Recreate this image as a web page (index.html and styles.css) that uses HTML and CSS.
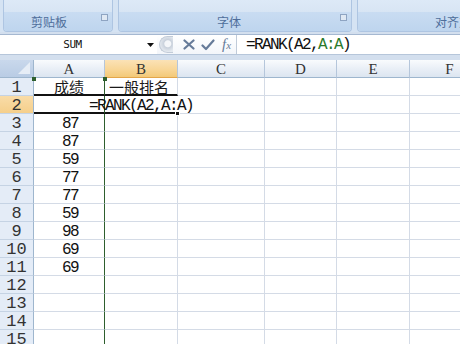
FILE: index.html
```html
<!DOCTYPE html>
<html>
<head>
<meta charset="utf-8">
<link rel="stylesheet" href="styles.css">
</head>
<body>
<div class="ribbon">
  <div class="group g1"><div class="gbody"></div><div class="glabel">剪贴板<span class="launch"></span></div></div>
  <div class="group g2"><div class="gbody"></div><div class="glabel">字体<span class="launch"></span></div></div>
  <div class="group g3"><div class="gbody"></div><div class="glabel">对齐方式</div></div>
</div>
<div class="fbar">
  <div class="namebox">SUM</div>
  <div class="nbarrow"><svg width="7" height="4" viewBox="0 0 7 4"><path d="M0 0H7L3.5 4Z" fill="#111"/></svg></div>
  <div class="fbtns">
    <span class="grip"></span>
    <svg class="ico" width="12" height="11" viewBox="0 0 12 11"><path d="M1.5 1.5L10.5 9.5M10.5 1.5L1.5 9.5" stroke="#667b99" stroke-width="2.2" stroke-linecap="round"/></svg>
    <svg class="ico" width="14" height="12" viewBox="0 0 14 12"><path d="M1.5 6.5L5 10L12.5 1.5" stroke="#667b99" stroke-width="2.2" fill="none" stroke-linecap="round" stroke-linejoin="round"/></svg>
    <span class="fx">f<span class="fxx">x</span></span>
  </div>
  <div class="finput">=RANK(A2,<span class="ref">A:A</span>)</div>
</div>
<div class="grid">
  <div class="corner"><svg width="12" height="12" viewBox="0 0 12 12"><path d="M12 0V12H0Z" fill="#e6edf6"/></svg></div>
  <div class="ch">A</div><div class="ch sel">B</div><div class="ch">C</div><div class="ch">D</div><div class="ch">E</div><div class="ch">F</div>

  <div class="rh">1</div><div class="c ca cj ul"><span class="mk mkl"></span><span class="mk mkr"></span>成绩</div><div class="c cj ul b1">一般排名</div><div class="c"></div><div class="c"></div><div class="c"></div><div class="c"></div>

  <div class="rh sel">2</div><div class="c ca ul"></div><div class="c ul b2"><span class="ftxt">=RANK(A2,A:A)</span><span class="handle"></span></div><div class="c"></div><div class="c"></div><div class="c"></div><div class="c"></div>

  <div class="rh">3</div><div class="c ca num">87</div><div class="c"></div><div class="c"></div><div class="c"></div><div class="c"></div><div class="c"></div>
  <div class="rh">4</div><div class="c ca num">87</div><div class="c"></div><div class="c"></div><div class="c"></div><div class="c"></div><div class="c"></div>
  <div class="rh">5</div><div class="c ca num">59</div><div class="c"></div><div class="c"></div><div class="c"></div><div class="c"></div><div class="c"></div>
  <div class="rh">6</div><div class="c ca num">77</div><div class="c"></div><div class="c"></div><div class="c"></div><div class="c"></div><div class="c"></div>
  <div class="rh">7</div><div class="c ca num">77</div><div class="c"></div><div class="c"></div><div class="c"></div><div class="c"></div><div class="c"></div>
  <div class="rh">8</div><div class="c ca num">59</div><div class="c"></div><div class="c"></div><div class="c"></div><div class="c"></div><div class="c"></div>
  <div class="rh">9</div><div class="c ca num">98</div><div class="c"></div><div class="c"></div><div class="c"></div><div class="c"></div><div class="c"></div>
  <div class="rh">10</div><div class="c ca num">69</div><div class="c"></div><div class="c"></div><div class="c"></div><div class="c"></div><div class="c"></div>
  <div class="rh">11</div><div class="c ca num">69</div><div class="c"></div><div class="c"></div><div class="c"></div><div class="c"></div><div class="c"></div>
  <div class="rh">12</div><div class="c ca"></div><div class="c"></div><div class="c"></div><div class="c"></div><div class="c"></div><div class="c"></div>
  <div class="rh">13</div><div class="c ca"></div><div class="c"></div><div class="c"></div><div class="c"></div><div class="c"></div><div class="c"></div>
  <div class="rh">14</div><div class="c ca"></div><div class="c"></div><div class="c"></div><div class="c"></div><div class="c"></div><div class="c"></div>
  <div class="rh">15</div><div class="c ca"></div><div class="c"></div><div class="c"></div><div class="c"></div><div class="c"></div><div class="c"></div>
</div>
</body>
</html>
```
FILE: styles.css
```css
* { box-sizing: border-box; }
html, body { margin: 0; padding: 0; }
body {
  width: 460px;
  height: 344px;
  overflow: hidden;
  background: #d3dfee;
  font-family: "Liberation Mono", monospace;
}

/* Ribbon */
.ribbon {
  height: 32px;
  display: flex;
  gap: 5px;
  padding-left: 3px;
  background: #d5e3f3;
  overflow: hidden;
}
.group {
  display: flex;
  flex-direction: column;
  border: 1px solid #aec5e2;
  border-top: none;
  border-radius: 0 0 4px 4px;
  overflow: hidden;
  flex-shrink: 0;
}
.g1 { width: 110px; }
.g2 { width: 234px; }
.g3 { width: 230px; }
.gbody {
  height: 12px;
  background: linear-gradient(#dde9f7, #d8e5f4);
}
.glabel {
  height: 19px;
  background: linear-gradient(#c9dcf2, #bed5ee);
  font: 12px "Noto Sans CJK SC", sans-serif;
  color: #4e6e9b;
  display: flex;
  align-items: center;
  justify-content: center;
  position: relative;
}
.g1 .glabel { padding-right: 18px; }
.g2 .glabel { padding-right: 12px; }
.g3 .glabel { justify-content: flex-start; padding-left: 77px; }
.launch {
  position: absolute;
  right: 4px;
  top: 2px;
  width: 7px;
  height: 7px;
  border: 1px solid #8ea4c2;
  background: #dfe8f3;
}

/* Formula bar */
.fbar {
  margin-top: 2px;
  height: 21px;
  display: flex;
  background: #fff;
  border-top: 1px solid #a5b8d1;
  border-bottom: 1px solid #b6c6da;
}
.namebox {
  width: 143px;
  display: flex;
  align-items: center;
  justify-content: center;
  font-family: "DejaVu Sans Mono", monospace;
  font-size: 11px;
  letter-spacing: -0.5px;
  color: #111;
  padding-left: 2px;
}
.nbarrow {
  width: 14px;
  display: flex;
  align-items: center;
  justify-content: center;
}
.fbtns {
  width: 79px;
  display: flex;
  align-items: center;
  gap: 6px;
  padding-left: 2px;
  background: linear-gradient(#ffffff, #f3f6fa);
}
.grip {
  width: 14px;
  height: 17px;
  border-radius: 9px 0 0 9px;
  background: radial-gradient(circle at 60% 45%, #f4f6f9 0 3px, #c9d1dc 4px, #e4e9ef 8px);
  border: 1px solid #c3ccd8;
  border-right: none;
  margin-right: 4px;
}
.ico { flex-shrink: 0; }
.fx {
  font: italic 15px "Liberation Serif", serif;
  color: #667b99;
  margin-left: 1px;
}
.fxx { font-size: 11px; }
.finput {
  flex: 1;
  border-left: 1px solid #c0cbd9;
  display: flex;
  align-items: center;
  padding-left: 9px;
  font-size: 16px;
  letter-spacing: -1.6px;
  color: #111;
}
.ref { color: #2b7a2b; }

/* Grid */
.grid {
  margin-top: 5px;
  display: grid;
  grid-template-columns: 34px 71px 73px 87px 72px 73px 80px;
  grid-auto-rows: 18px;
  background: #fff;
}
.corner {
  background: linear-gradient(#c9d8ec, #b9cce4);
  border-right: 1px solid #9eb6ce;
  border-bottom: 1px solid #9eb6ce;
  display: flex;
  align-items: flex-end;
  justify-content: flex-end;
  padding: 0 3px 3px 0;
}
.ch {
  background: linear-gradient(#f9fbfd, #e8eef6 55%, #dce5f0);
  border-right: 1px solid #b5c6db;
  border-bottom: 1px solid #9eb6ce;
  display: flex;
  align-items: center;
  justify-content: center;
  font: 15px "Liberation Serif", serif;
  color: #333;
  padding-top: 1px;
}
.ch.sel {
  background: linear-gradient(#fbe2b6, #f8d697 55%, #f3c978);
  border-bottom-color: #e3a64a;
}
.rh {
  background: #e4ecf7;
  border-right: 1px solid #9eb6ce;
  border-bottom: 1px solid #c5d3e4;
  display: flex;
  align-items: center;
  justify-content: center;
  font-size: 17px;
  color: #333;
  padding-top: 2px;
}
.rh.sel {
  background: linear-gradient(#f9dca8, #f5cf8b);
}
.c {
  border-right: 1px solid #d4dbe6;
  border-bottom: 1px solid #d4dbe6;
  display: flex;
  align-items: center;
  justify-content: center;
  color: #111;
  position: relative;
}
.ca { border-right: 1px solid #2e5f2e; }
.cj {
  font: 15px "Noto Sans CJK SC", sans-serif;
  color: #1a1a1a;
}
.b1 { padding-right: 4px; }
.num {
  font-size: 16px;
  letter-spacing: -1.6px;
  padding-top: 2px;
  padding-left: 2px;
}
.ul { border-bottom: 2px solid #111; }
.b1.ul { border-right-color: #d4dbe6; }
.b2 { border-right-color: transparent; }
.ftxt {
  white-space: nowrap;
  font-size: 16px;
  letter-spacing: -1.6px;
  position: relative;
  z-index: 2;
  padding-top: 3px;
}
.handle {
  position: absolute;
  right: -3px;
  bottom: -4px;
  width: 5px;
  height: 5px;
  background: #111;
  border: 1px solid #fff;
  z-index: 3;
}
.mk {
  position: absolute;
  top: -1px;
  width: 4px;
  height: 4px;
  background: #2e5f2e;
  z-index: 3;
}
.mkl { left: -2px; }
.mkr { right: -3px; }
```
